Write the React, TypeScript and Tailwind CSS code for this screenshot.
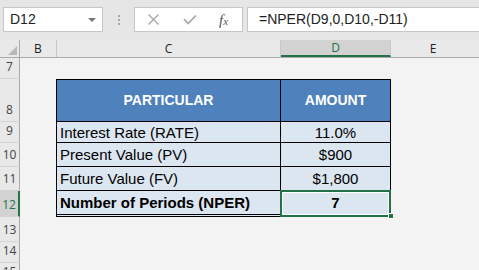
import React from 'react';

const cellFont = { fontFamily: '"Liberation Sans", Arial, sans-serif' };

const rows = [
  { n: '7', h: 'h-[21px]' },
  { n: '8', h: 'h-[43px]' },
  { n: '9', h: 'h-[21px]' },
  { n: '10', h: 'h-[24px]' },
  { n: '11', h: 'h-[24px]' },
  { n: '12', h: 'h-[26px]' },
  { n: '13', h: 'h-[25px]' },
  { n: '14', h: 'h-[21px]' },
  { n: '15', h: 'h-[21px]' },
];

const data: Record<string, [string, string]> = {
  '9': ['Interest Rate (RATE)', '11.0%'],
  '10': ['Present Value (PV)', '$900'],
  '11': ['Future Value (FV)', '$1,800'],
  '12': ['Number of Periods (NPER)', '7'],
};

const RowHead = ({ n }: { n: string }) => {
  const sel = n === '12';
  return (
    <div
      className={
        'w-[20px] shrink-0 flex items-end justify-center pb-[2px] text-[12px] border-b border-[#d4d4d4] ' +
        (sel
          ? 'bg-[#d2d2d2] text-[#217346] border-r-2 border-r-[#217346]'
          : 'bg-[#e9e9e9] text-[#444] border-r border-r-[#ababab]')
      }
      style={{ fontFamily: '"Open Sans", sans-serif' }}
    >
      {n}
    </div>
  );
};

const App = () => {
  return (
    <div className="w-[479px] h-[270px] overflow-hidden bg-[#f3f3f3] flex flex-col" style={cellFont}>
      {/* formula bar */}
      <div className="h-[40px] shrink-0 bg-[#e6e6e6] flex items-start pt-[7px] pl-[3px]">
        <div className="w-[100px] shrink-0 h-[25px] bg-white border border-[#c6c6c6] flex items-center justify-between pl-[6px] pr-[6px]">
          <span className="text-[14px] text-[#222]">D12</span>
          <span className="w-0 h-0 border-l-[4px] border-r-[4px] border-t-[4px] border-l-transparent border-r-transparent border-t-[#777]" />
        </div>
        <div className="w-[31px] shrink-0 h-[25px] flex flex-col items-center justify-center gap-[2px] pl-[1px]">
          <span className="w-[2px] h-[2px] bg-[#a8a8a8]" />
          <span className="w-[2px] h-[2px] bg-[#a8a8a8]" />
          <span className="w-[2px] h-[2px] bg-[#a8a8a8]" />
        </div>
        <div className="w-[109px] shrink-0 h-[25px] bg-white border border-[#c6c6c6] flex items-center pl-[13px]">
          <svg width="11" height="11" viewBox="0 0 11 11" className="shrink-0">
            <path d="M0.5 0.5 L10.5 10.5 M10.5 0.5 L0.5 10.5" stroke="#a6a6a6" strokeWidth="1.3" />
          </svg>
          <svg width="14" height="11" viewBox="0 0 14 11" className="ml-[24px] shrink-0">
            <path d="M1 5 L5 9.5 L13 1.5" stroke="#a6a6a6" strokeWidth="1.7" fill="none" />
          </svg>
          <span className="ml-[22px] text-[#555] italic leading-none" style={{ fontFamily: '"Liberation Serif", serif' }}>
            <span className="text-[15px]">f</span>
            <span className="text-[11px]">x</span>
          </span>
        </div>
        <div className="ml-[4px] flex-1 h-[25px] bg-white border border-[#c6c6c6] border-r-0 flex items-center pl-[11px]">
          <span className="text-[14px] text-[#222]">=NPER(D9,0,D10,-D11)</span>
        </div>
      </div>

      {/* column headers */}
      <div className="h-[18px] shrink-0 flex bg-[#e9e9e9] border-b border-[#ababab] text-[12px] text-[#222]" style={{ fontFamily: '"Open Sans", sans-serif' }}>
        <div className="w-[20px] shrink-0 border-r border-[#ababab] flex items-end justify-end p-[2px]">
          <span className="w-0 h-0" style={{ borderBottom: '9px solid #b8b8b8', borderLeft: '9px solid transparent' }} />
        </div>
        <div className="w-[37px] shrink-0 border-r border-[#c8c8c8] flex items-center justify-center">B</div>
        <div className="w-[224px] shrink-0 border-r border-[#c8c8c8] flex items-center justify-center">C</div>
        <div className="w-[110px] shrink-0 bg-[#d2d2d2] text-[#217346] border-b-2 border-[#217346] border-r border-r-[#c8c8c8] flex items-center justify-center">D</div>
        <div className="flex-1 flex items-center justify-center pr-[4px]">E</div>
      </div>

      {/* sheet rows */}
      {rows.map((r) => {
        const d = data[r.n];
        const isHead = r.n === '8';
        const isLast = r.n === '12';
        const inTable = isHead || !!d;
        return (
          <div key={r.n} className={'flex shrink-0 ' + r.h}>
            <RowHead n={r.n} />
            <div className="w-[36px] shrink-0" />
            {inTable ? (
              <>
                <div
                  className={
                    'w-[225px] shrink-0 flex items-center border-l border-r border-black ' +
                    (isHead
                      ? 'bg-[#4f81bd] text-white font-bold justify-center border-t border-b'
                      : 'bg-[#dce6f1] text-black pl-[3px] ' + (isLast ? 'font-bold border-b-[3px] border-double' : 'border-b'))
                  }
                >
                  <span className={isHead ? 'text-[14px]' : 'text-[15px] pt-[2px]'}>{isHead ? 'PARTICULAR' : d[0]}</span>
                </div>
                <div
                  className={
                    'relative w-[110px] shrink-0 flex items-center justify-center border-r border-black ' +
                    (isHead
                      ? 'bg-[#4f81bd] text-white font-bold border-t border-b'
                      : 'bg-[#dce6f1] text-black ' + (isLast ? 'font-bold border-b-[3px] border-double' : 'border-b'))
                  }
                >
                  <span className={isHead ? 'text-[14px]' : 'text-[15px] pt-[2px]'}>{isHead ? 'AMOUNT' : d[1]}</span>
                  {isLast && (
                    <>
                      <div className="absolute -left-[1px] -top-[1px] -right-[1px] -bottom-[3px] border-2 border-[#217346]">
                        <div className="w-full h-full border border-white" />
                      </div>
                      <div className="absolute -right-[4px] -bottom-[5px] w-[6px] h-[6px] bg-[#217346] border border-white" />
                    </>
                  )}
                </div>
              </>
            ) : null}
          </div>
        );
      })}
    </div>
  );
};

export default App;
